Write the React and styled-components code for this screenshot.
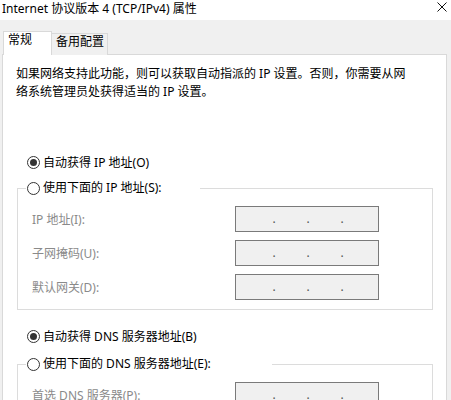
import React from "react";
import styled, { createGlobalStyle } from "styled-components";

const Global = createGlobalStyle`
  html, body { margin: 0; padding: 0; }
  body {
    background: #f0f0f0;
    font-family: "Noto Sans", "Noto Sans CJK SC", sans-serif;
    font-size: 12px;
    color: #000;
  }
`;

const Window = styled.div`
  width: 451px;
  height: 400px;
  overflow: hidden;
  background: #f0f0f0;
`;

const TitleBar = styled.div`
  height: 20px;
  background: #fff;
  display: flex;
  justify-content: space-between;
  align-items: flex-start;
  padding: 0 4px 0 2px;
  box-sizing: border-box;
`;

const Title = styled.div`
  line-height: 18px;
  white-space: nowrap;
`;

const Close = styled.svg`
  margin-top: 2px;
  display: block;
`;

const TabBar = styled.div`
  margin-top: 11px;
  height: 24px;
  display: flex;
  align-items: flex-end;
  padding-left: 3px;
`;

const Tab = styled.div`
  box-sizing: border-box;
  width: ${(p) => p.$width}px;
  height: ${(p) => (p.$active ? 24 : 22)}px;
  background: ${(p) => (p.$active ? "#fff" : "#f0f0f0")};
  border: 1px solid #d9d9d9;
  border-bottom: none;
  ${(p) => (p.$active ? "" : "border-left: none;")}
  padding-left: 4px;
  line-height: 16px;
  white-space: nowrap;
  position: ${(p) => (p.$active ? "relative" : "static")};
  z-index: ${(p) => (p.$active ? 1 : 0)};
`;

const Panel = styled.div`
  margin: -1px 4px 0 2px;
  background: #fff;
  border: 1px solid #d9d9d9;
  padding: 10px 13px 0 14px;
  height: 400px;
`;

const Description = styled.div`
  margin-left: -1px;
  line-height: 18px;
  white-space: nowrap;
`;

const RadioRow = styled.div`
  display: flex;
  align-items: center;
  height: 20px;
  padding-left: ${(p) => p.$indent ?? 10}px;
  margin-top: ${(p) => p.$top ?? 0}px;
  white-space: nowrap;
`;

const Radio = styled.span`
  box-sizing: border-box;
  width: 13px;
  height: 13px;
  border: 1px solid #333;
  border-radius: 50%;
  background: #fff;
  margin-right: 3px;
  display: flex;
  align-items: center;
  justify-content: center;
  flex: none;
  &::after {
    content: "";
    width: 7px;
    height: 7px;
    border-radius: 50%;
    background: ${(p) => (p.$checked ? "#333" : "transparent")};
  }
`;

const Group = styled.fieldset`
  margin: ${(p) => p.$top}px 0 0 0;
  padding: 8px 0 9px 8px;
  border: 1px solid #dcdcdc;
  min-inline-size: 0;
`;

const Legend = styled.legend`
  padding: 0;
  width: ${(p) => p.$width}px;
  line-height: 20px;
`;

const LegendInner = styled(RadioRow)`
  padding-left: 1px;
`;

const Fields = styled.div`
  margin-left: 6px;
  display: grid;
  grid-template-columns: 203px 144px;
  grid-auto-rows: 26px;
  row-gap: 8px;
  align-items: center;
`;

const Label = styled.div`
  color: #8a8a8a;
  white-space: nowrap;
`;

const IpBox = styled.div`
  box-sizing: border-box;
  height: 26px;
  border: 1px solid #7a7a7a;
  background: #f0f0f0;
  display: flex;
  padding-left: 21px;
  line-height: 24px;
  color: #555;
`;

const Dot = styled.span`
  width: 34px;
  text-align: center;
`;

const Ip = () => (
  <IpBox>
    <Dot>.</Dot>
    <Dot>.</Dot>
    <Dot>.</Dot>
  </IpBox>
);

export default function App() {
  return (
    <Window>
      <Global />
      <TitleBar>
        <Title>Internet 协议版本 4 (TCP/IPv4) 属性</Title>
        <Close width="10" height="10" viewBox="0 0 10 10">
          <path d="M0.5 0.5 L9.5 9.5 M9.5 0.5 L0.5 9.5" stroke="#111" strokeWidth="1" fill="none" />
        </Close>
      </TitleBar>
      <TabBar>
        <Tab $active $width={49}>常规</Tab>
        <Tab $width={56}>备用配置</Tab>
      </TabBar>
      <Panel>
        <Description>
          如果网络支持此功能，则可以获取自动指派的 IP 设置。否则，你需要从网
          <br />
          络系统管理员处获得适当的 IP 设置。
        </Description>
        <RadioRow $top={51}>
          <Radio $checked />
          自动获得 IP 地址(O)
        </RadioRow>
        <Group $top={6}>
          <Legend $width={174}>
            <LegendInner>
              <Radio />
              使用下面的 IP 地址(S):
            </LegendInner>
          </Legend>
          <Fields>
            <Label>IP 地址(I):</Label>
            <Ip />
            <Label>子网掩码(U):</Label>
            <Ip />
            <Label>默认网关(D):</Label>
            <Ip />
          </Fields>
        </Group>
        <RadioRow $top={16}>
          <Radio $checked />
          自动获得 DNS 服务器地址(B)
        </RadioRow>
        <Group $top={8}>
          <Legend $width={246}>
            <LegendInner>
              <Radio />
              使用下面的 DNS 服务器地址(E):
            </LegendInner>
          </Legend>
          <Fields>
            <Label>首选 DNS 服务器(P):</Label>
            <Ip />
            <Label>备用 DNS 服务器(A):</Label>
            <Ip />
          </Fields>
        </Group>
      </Panel>
    </Window>
  );
}
